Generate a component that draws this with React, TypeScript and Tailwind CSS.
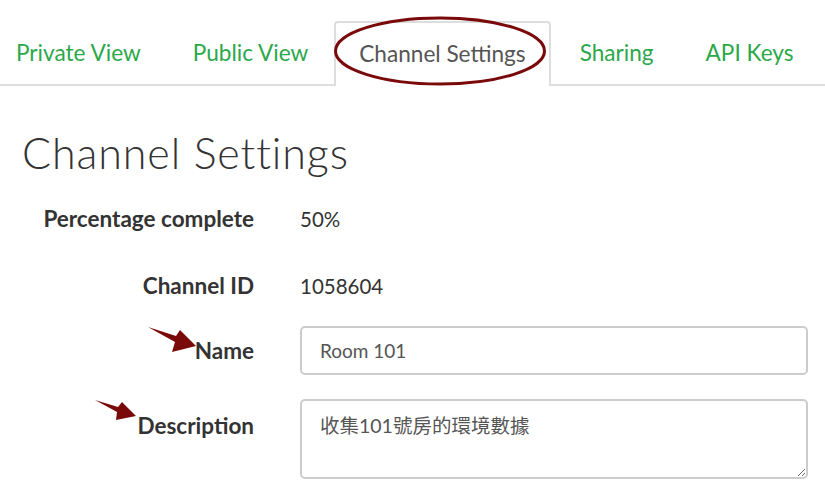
import React from 'react'

const tabs = ['Private View', 'Public View', 'Channel Settings', 'Sharing', 'API Keys']

const Label = ({ children, className = '' }: { children: React.ReactNode; className?: string }) => (
  <div className={`w-[232px] shrink-0 text-right text-[22.5px] font-bold text-[#333] leading-[28px] whitespace-nowrap ${className}`}>
    {children}
  </div>
)

export default function App() {
  return (
    <div className="relative w-[825px] h-[485px] overflow-hidden bg-white font-['Lato',sans-serif]">
      {/* tabs */}
      <div className="flex items-end pt-[21px] border-b-2 border-[#ddd]">
        <div className="flex gap-[6px] -ml-[7px] -mb-[2px] whitespace-nowrap">
          {tabs.map((t) => {
            const active = t === 'Channel Settings'
            return (
              <div
                key={t}
                className={
                  active
                    ? 'shrink-0 h-[65px] pb-[2px] px-[23px] -ml-[3px] flex items-center text-[22.6px] text-[#555] bg-white border-2 border-b-0 border-[#ddd] rounded-t-[4px]'
                    : 'shrink-0 h-[65px] pb-[2px] px-[23px] flex items-center text-[22.6px] text-[#2ba84a]'
                }
              >
                {t}
              </div>
            )
          })}
        </div>
      </div>

      <div className="px-[22px] pr-[17px]">
        <h1 className="mt-[42px] text-[43px] font-light text-[#333] leading-[50px] tracking-[0.9px] whitespace-nowrap">
          Channel Settings
        </h1>

        <div className="mt-[21px] flex items-center h-[40px]">
          <Label>Percentage complete</Label>
          <div className="ml-[46px] text-[20.5px] text-[#333]">50%</div>
        </div>

        <div className="mt-[27px] flex items-center h-[40px]">
          <Label>Channel ID</Label>
          <div className="ml-[46px] text-[20.5px] text-[#333]">1058604</div>
        </div>

        <div className="mt-[20px] flex items-center">
          <Label>Name</Label>
          <input
            readOnly
            value="Room 101"
            className="ml-[46px] flex-1 h-[49px] px-[18px] border-2 border-[#ccc] rounded-[5px] text-[19px] text-[#555] outline-none font-['Lato',sans-serif]"
          />
        </div>

        <div className="mt-[24px] flex items-start">
          <Label className="pt-[13px]">Description</Label>
          <textarea
            readOnly
            value="收集101號房的環境數據"
            className="ml-[46px] flex-1 h-[80px] px-[18px] py-[11px] border-2 border-[#ccc] rounded-[5px] text-[19.5px] text-[#555] outline-none font-['Lato','Noto_Sans_CJK_TC',sans-serif] leading-[28px]"
          />
        </div>
      </div>

      {/* annotations */}
      <svg className="absolute inset-0 pointer-events-none" width="825" height="485" viewBox="0 0 825 485">
        <ellipse cx="440" cy="51" rx="104.5" ry="33" fill="none" stroke="#7a0a0a" strokeWidth="3" />
        <polygon points="148,327 176,336 180,330 196,346 172,352 175,342" fill="#7a0a0a" />
        <polygon points="95,400 118,407 122,402 136,416 116,420 117,412" fill="#7a0a0a" />
      </svg>
    </div>
  )
}
